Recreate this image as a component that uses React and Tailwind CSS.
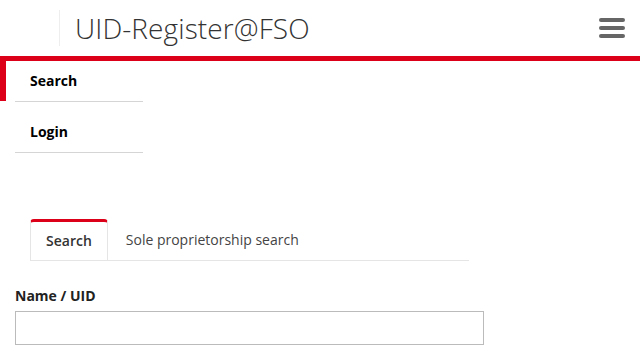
import React from "react";

export default function App() {
  const nav = [
    { label: "Search", active: true },
    { label: "Login", active: false },
  ];

  return (
    <div className="w-[640px] h-[360px] overflow-hidden bg-white text-[#333]" style={{ fontFamily: '"Open Sans", sans-serif' }}>
      <header className="h-[56px] flex items-center">
        <div className="w-[60px] h-[36px] border-r border-[#eeeeee]" />
        <h1 className="ml-[15px] text-[28px] font-light leading-none text-[#333] tracking-[0.1px]">UID-Register@FSO</h1>
        <button className="ml-auto mr-[15px] w-[26px] flex flex-col gap-[4px]">
          <span className="block h-[4px] rounded-full bg-[#666]" />
          <span className="block h-[4px] rounded-full bg-[#666]" />
          <span className="block h-[4px] rounded-full bg-[#666]" />
        </button>
      </header>
      <div className="h-[5px] bg-[#dc0018]" />

      <nav className="w-[143px]">
        {nav.map((item) => (
          <div key={item.label} className="relative">
            {item.active && <div className="absolute left-0 top-0 h-[40px] w-[6px] bg-[#dc0018]" />}
            <div className="ml-[15px] h-[41px] pl-[15px] pb-[2px] flex items-center text-[14px] font-bold text-black border-b border-[#d5d5d5]">
              {item.label}
            </div>
            <div className="h-[10px]" />
          </div>
        ))}
      </nav>

      <div className="px-[15px] pt-[56px]">
        <div className="ml-[15px] w-[439px] flex border-b border-[#e5e5e5] text-[14px]">
          <div className="h-[41px] -mb-px px-[15px] pb-[2px] flex items-center bg-white border-t-[3px] border-t-[#dc0018] border-x border-x-[#e5e5e5] rounded-t-[4px] font-semibold text-[#333]">
            Search
          </div>
          <div className="h-[41px] px-[18px] flex items-center text-[#444]">Sole proprietorship search</div>
        </div>

        <label className="block mt-[24px] text-[14px] font-bold text-[#222]">Name / UID</label>
        <input className="mt-[5px] block w-[469px] h-[34px] border border-[#bbbbbb] bg-white" />
      </div>
    </div>
  );
}
